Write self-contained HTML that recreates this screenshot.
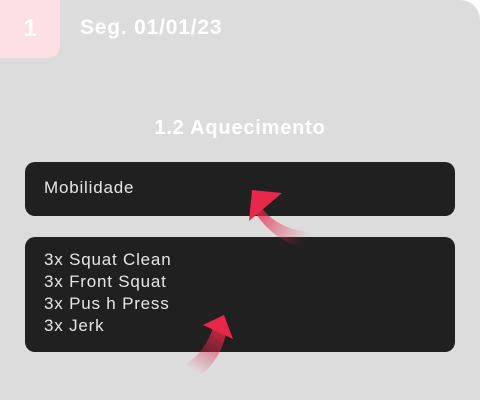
<!DOCTYPE html>
<html><head><style>
body{margin:0;width:480px;height:400px;background:#fff;font-family:"Liberation Sans",sans-serif;overflow:hidden}
.card{position:absolute;left:0;top:0;width:480px;height:400px;background:#dcdcdc;border-radius:20px 20px 0 0}
.badge{position:absolute;left:0;top:0;width:60px;height:58px;background:#fde0e4;border-radius:0 0 12px 0;color:#fff;font-weight:bold;font-size:24px;line-height:58px;text-align:center}
.date{position:absolute;left:80px;top:16px;color:#fff;font-weight:bold;font-size:21px;letter-spacing:0.8px}
.title{position:absolute;left:0;width:480px;top:117px;text-align:center;color:#fff;font-weight:bold;font-size:20px;letter-spacing:0.8px}
.box{position:absolute;left:25px;width:430px;background:#202020;border-radius:10px;color:#e6e6e6;font-size:17px;letter-spacing:0.8px;line-height:22px;box-sizing:border-box;padding-left:19px}
</style></head><body>
<div class="card"></div>
<div class="badge">1</div>
<div class="date">Seg. 01/01/23</div>
<div class="title">1.2 Aquecimento</div>
<div class="box" style="top:162px;height:54px;padding-top:15px">Mobilidade</div>
<div class="box" style="top:237px;height:115px;padding-top:12px">3x Squat Clean<br>3x Front Squat<br>3x Pus h Press<br>3x Jerk</div>
<svg width="480" height="400" style="position:absolute;left:0;top:0">
<defs>
<linearGradient id="g1" x1="252" y1="195" x2="305" y2="240" gradientUnits="userSpaceOnUse"><stop offset="0" stop-color="#e8274b"/><stop offset="1" stop-color="#e8274b" stop-opacity="0"/></linearGradient>
<linearGradient id="g2" x1="225" y1="320" x2="195" y2="372" gradientUnits="userSpaceOnUse"><stop offset="0" stop-color="#e8274b"/><stop offset="1" stop-color="#e8274b" stop-opacity="0"/></linearGradient>
</defs>
<polygon points="252,190 282,193 249,221" fill="#e8274b"/>
<path d="M260,206 Q280,232 314,232 L302,248 Q274,240 256,214 Z" fill="url(#g1)"/>
<polygon points="203,325 224,315 233,339" fill="#e8274b"/>
<path d="M213,328 Q205,352 186,364 L200,376 Q220,360 226,334 Z" fill="url(#g2)"/>
</svg>
</body></html>
